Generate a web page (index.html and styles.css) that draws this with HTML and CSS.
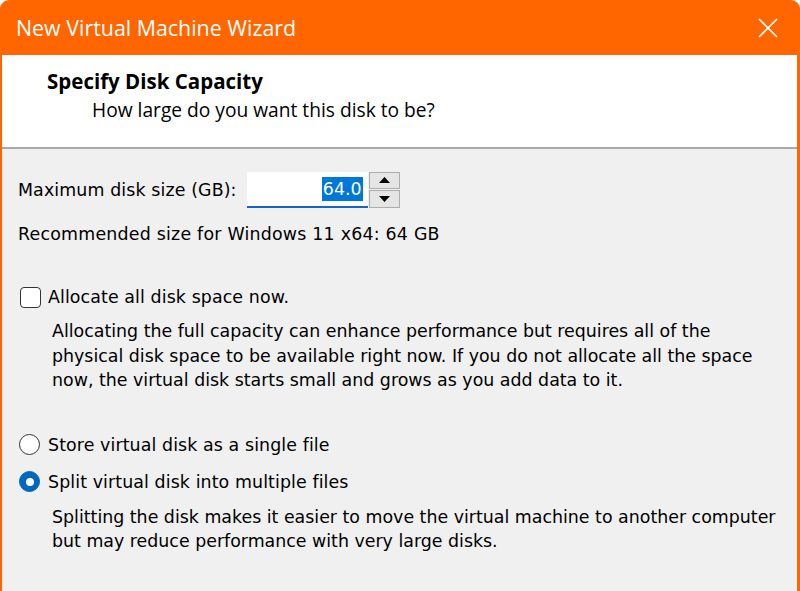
FILE: index.html
```html
<!DOCTYPE html>
<html>
<head>
<meta charset="utf-8">
<link rel="stylesheet" href="styles.css">
</head>
<body>
<div class="window">
  <div class="titlebar">
    <span class="title">New Virtual Machine Wizard</span>
    <svg class="close" width="20" height="20" viewBox="0 0 20 20"><path d="M1 1 L19 19 M19 1 L1 19" stroke="#fff" stroke-width="1.6" fill="none"/></svg>
  </div>
  <div class="frame">
    <div class="header">
      <div class="h-title">Specify Disk Capacity</div>
      <div class="h-sub">How large do you want this disk to be?</div>
    </div>
    <div class="content">
      <div class="size-row">
        <span class="label">Maximum disk size (GB):</span>
        <div class="input"><span class="sel">64.0</span></div>
        <div class="spin">
          <div class="spin-btn"><svg width="11" height="6" viewBox="0 0 11 6"><path d="M5.5 0 L11 6 L0 6 Z" fill="#000"/></svg></div>
          <div class="spin-btn"><svg width="11" height="6" viewBox="0 0 11 6"><path d="M0 0 L11 0 L5.5 6 Z" fill="#000"/></svg></div>
        </div>
      </div>
      <div class="rec">Recommended size for Windows 11 x64: 64 GB</div>
      <div class="option opt-check">
        <span class="checkbox"></span>
        <span>Allocate all disk space now.</span>
      </div>
      <p class="desc">Allocating the full capacity can enhance performance but requires all of the physical disk space to be available right now. If you do not allocate all the space now, the virtual disk starts small and grows as you add data to it.</p>
      <div class="option opt-r1">
        <span class="radio"></span>
        <span>Store virtual disk as a single file</span>
      </div>
      <div class="option opt-r2">
        <span class="radio on"></span>
        <span>Split virtual disk into multiple files</span>
      </div>
      <p class="desc desc2">Splitting the disk makes it easier to move the virtual machine to another computer but may reduce performance with very large disks.</p>
    </div>
  </div>
</div>
</body>
</html>
```
FILE: styles.css
```css
html, body {
  margin: 0;
  padding: 0;
  background: #ffffff;
}
.window {
  width: 800px;
  height: 591px;
  background: #ff6600;
  border-radius: 9px 9px 0 0;
  display: flex;
  flex-direction: column;
  overflow: hidden;
}
.titlebar {
  height: 55px;
  flex: none;
  display: flex;
  align-items: center;
  justify-content: space-between;
  padding: 0 22px 0 16px;
}
.title {
  font-family: "Open Sans", sans-serif;
  font-size: 21.4px;
  color: #ffffff;
}
.close {
  display: block;
}
.frame {
  flex: 1;
  margin: 0 3px 0 2px;
  display: flex;
  flex-direction: column;
  background: #f0f0f0;
}
.header {
  height: 94px;
  flex: none;
  background: #ffffff;
  border-bottom: 2px solid #a9a9a9;
  box-sizing: border-box;
  padding-top: 12px;
  font-family: "Open Sans", sans-serif;
  color: #000;
}
.h-title {
  font-weight: bold;
  font-size: 20.5px;
  padding-left: 45px;
  height: 28px;
  line-height: 28px;
}
.h-sub {
  font-size: 19.2px;
  padding-left: 90px;
  line-height: 29px;
}
.content {
  font-family: "DejaVu Sans", sans-serif;
  font-size: 17.4px;
  color: #000;
  padding: 22px 0 0 16px;
}
.size-row {
  display: flex;
  align-items: center;
  height: 37px;
}
.label {
  margin-right: 10px;
  letter-spacing: 0.12px;
}
.input {
  width: 121px;
  height: 36px;
  box-sizing: border-box;
  background: #fff;
  border-bottom: 2px solid #1764c6;
  display: flex;
  align-items: center;
  justify-content: flex-end;
  padding-right: 5px;
}
.sel {
  background: #0078d7;
  color: #fff;
  line-height: 24px;
  padding: 0 1px;
}
.spin {
  margin-left: 1px;
  width: 31px;
  height: 36px;
  display: flex;
  flex-direction: column;
  gap: 1px;
}
.spin-btn {
  flex: 1;
  background: #e5e5e5;
  border: 1px solid #adadad;
  display: flex;
  align-items: center;
  justify-content: center;
}
.spin-btn svg { display: block; }
.rec {
  margin-top: 14px;
  line-height: 24px;
  letter-spacing: 0.22px;
}
.option {
  display: flex;
  align-items: center;
  line-height: 24px;
  letter-spacing: 0.1px;
}
.opt-check {
  margin-top: 39px;
}
.opt-r1 {
  margin-top: 40px;
}
.opt-r2 {
  margin-top: 13px;
}
.checkbox {
  width: 19px;
  height: 19px;
  border: 1.5px solid #333;
  border-radius: 4px;
  margin: 0 7px 0 2px;
  flex: none;
  background: #fff;
}
.radio {
  width: 19px;
  height: 19px;
  border: 1.5px solid #333;
  border-radius: 50%;
  margin: 0 8px 0 1px;
  flex: none;
  background: #fff;
}
.radio.on {
  background: #0067c0;
  border-color: #0067c0;
  position: relative;
}
.radio.on::after {
  content: "";
  position: absolute;
  left: 5.5px;
  top: 5.5px;
  width: 8px;
  height: 8px;
  border-radius: 50%;
  background: #fff;
}
.desc {
  margin: 10px 0 0 34px;
  width: 728px;
  line-height: 24.5px;
}
.desc2 {
  margin-top: 11px;
}
```
